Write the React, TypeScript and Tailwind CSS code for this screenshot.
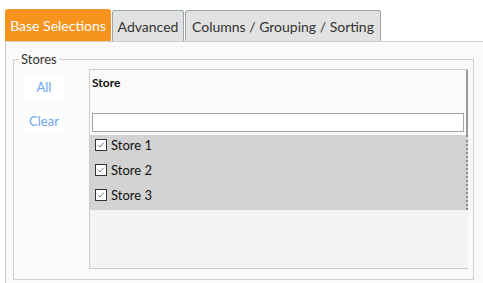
import React from "react";

const stores = ["Store 1", "Store 2", "Store 3"];

const font = { fontFamily: "Lato, 'Open Sans', sans-serif" };

const Check = () => (
  <span className="flex h-[12px] w-[12px] items-center justify-center border border-[#333] bg-white">
    <svg width="8" height="8" viewBox="0 0 8 8">
      <path d="M1.2 4.2 L3 6 L6.8 1.6" fill="none" stroke="#777" strokeWidth="1" />
    </svg>
  </span>
);

export default function App() {
  return (
    <div
      className="h-[283px] w-[483px] overflow-hidden bg-white pl-[5px] pt-[9px] text-[#222]"
      style={font}
    >
      {/* tab strip */}
      <div className="flex h-[32px] items-stretch">
        <div className="flex w-[106px] items-center justify-center rounded-t-[3px] bg-[#f7941e] pt-[1px] text-[14px] text-white">
          Base Selections
        </div>
        <div className="ml-[1px] mt-[1px] flex w-[72px] items-center justify-center rounded-t-[3px] border border-b-0 border-[#9aa6ae] bg-[#e2e2e2] text-[14px] text-[#333]">
          Advanced
        </div>
        <div className="ml-[1px] mt-[1px] flex w-[196px] items-center justify-center rounded-t-[3px] border border-b-0 border-[#9aa6ae] bg-[#e2e2e2] text-[14px] text-[#333]">
          Columns / Grouping / Sorting
        </div>
      </div>

      {/* panel */}
      <div className="h-[260px] w-[520px] border-l border-t border-[#cdcdcd] bg-[#fafafa] pl-[7px] pt-[9px]">
        <fieldset className="h-[229px] w-[461px] border border-[#cfcfcf] px-0 pb-[10px]">
          <legend className="ml-[5px] px-[2px] text-[13px] leading-[17px] text-[#333]">Stores</legend>
          <div className="flex pt-[1px]">
            <div className="ml-[10px] flex w-[65px] flex-col gap-[12px] pt-[8px]">
              <button className="h-[22px] w-[40px] rounded-[3px] bg-white text-[13px] text-[#6fa3f2]">All</button>
              <button className="h-[22px] w-[40px] rounded-[3px] bg-white text-[13px] text-[#6fa3f2]">Clear</button>
            </div>

            {/* grid */}
            <div className="flex h-[200px] w-[379px] flex-col border-b border-l border-t border-[#cdcdcd] bg-[#f4f4f4]">
              <div className="h-[65px] border-r-2 border-[#9a9a9a] bg-[#fafafa] pl-[2px] pr-[1px]">
                <div className="pt-[5px] text-[12px] font-bold leading-[16px] text-[#111]">Store</div>
                <input className="mt-[22px] block h-[19px] w-[372px] border-[1.5px] border-[#a3a3a3] bg-white outline-none" />
              </div>
              <div className="border-r-2 border-dotted border-[#8a8a8a] bg-[#d3d3d3]">
                {stores.map((s) => (
                  <div key={s} className="flex h-[25px] items-start gap-[4px] pl-[5px] pt-[2px] text-[13px] leading-[16px] text-[#111]">
                    <span className="pt-[2px]">
                      <Check />
                    </span>
                    <span>{s}</span>
                  </div>
                ))}
              </div>
            </div>
          </div>
        </fieldset>
      </div>
    </div>
  );
}
